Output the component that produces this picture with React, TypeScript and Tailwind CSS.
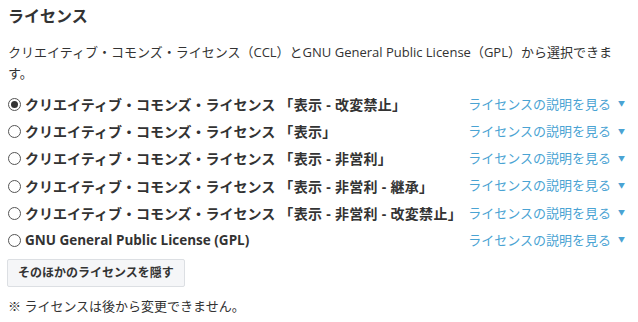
import React, { useState } from "react";

const licenses: { base: string; variant?: string }[] = [
  { base: "クリエイティブ・コモンズ・ライセンス", variant: "「表示 - 改変禁止」" },
  { base: "クリエイティブ・コモンズ・ライセンス", variant: "「表示」" },
  { base: "クリエイティブ・コモンズ・ライセンス", variant: "「表示 - 非営利」" },
  { base: "クリエイティブ・コモンズ・ライセンス", variant: "「表示 - 非営利 - 継承」" },
  { base: "クリエイティブ・コモンズ・ライセンス", variant: "「表示 - 非営利 - 改変禁止」" },
  { base: "GNU General Public License (GPL)" },
];

function Radio({ checked }: { checked: boolean }) {
  return (
    <span className="flex h-[13px] w-[13px] shrink-0 items-center justify-center rounded-full border border-[#555] bg-white">
      {checked && <span className="h-[7px] w-[7px] rounded-full bg-[#333]" />}
    </span>
  );
}

export default function App() {
  const [selected, setSelected] = useState(0);
  return (
    <div
      className="w-[638px] h-[322px] bg-white px-2 pt-[4px] text-[#333]"
      style={{ fontFamily: '"Open Sans", "Noto Sans CJK JP", sans-serif' }}
    >
      <h2 className="text-[16px] font-bold leading-[24px]">ライセンス</h2>
      <p className="mt-[14px] text-[13px] leading-[21px] pr-[4px]">
        クリエイティブ・コモンズ・ライセンス（CCL）とGNU General Public License（GPL）から選択できます。
      </p>
      <ul className="mt-[7px] flex flex-col">
        {licenses.map((item, i) => (
          <li key={i} className="flex h-[27.2px] items-center justify-between">
            <label
              className={`flex cursor-pointer items-center gap-[4px] font-bold ${
                item.variant ? "text-[14px]" : "text-[13.5px]"
              }`}
              onClick={() => setSelected(i)}
            >
              <Radio checked={selected === i} />
              <span>
                {item.base}
                {item.variant && (
                  <span className="ml-[4px] tracking-[0.3px]">{item.variant}</span>
                )}
              </span>
            </label>
            <a className="flex items-center gap-[7px] pr-[5px] text-[13px] text-[#4aa3d3]">
              ライセンスの説明を見る
              <span className="text-[7px] text-[#4aa3d3]">▼</span>
            </a>
          </li>
        ))}
      </ul>
      <button className="mt-[5px] ml-[-1px] h-[28px] rounded-[2px] border border-[#dcdfe3] bg-[#f5f6f8] px-[10px] text-[12px] font-bold text-[#333]">
        そのほかのライセンスを隠す
      </button>
      <p className="mt-[10px] text-[13px] text-[#333]">※ ライセンスは後から変更できません。</p>
    </div>
  );
}
